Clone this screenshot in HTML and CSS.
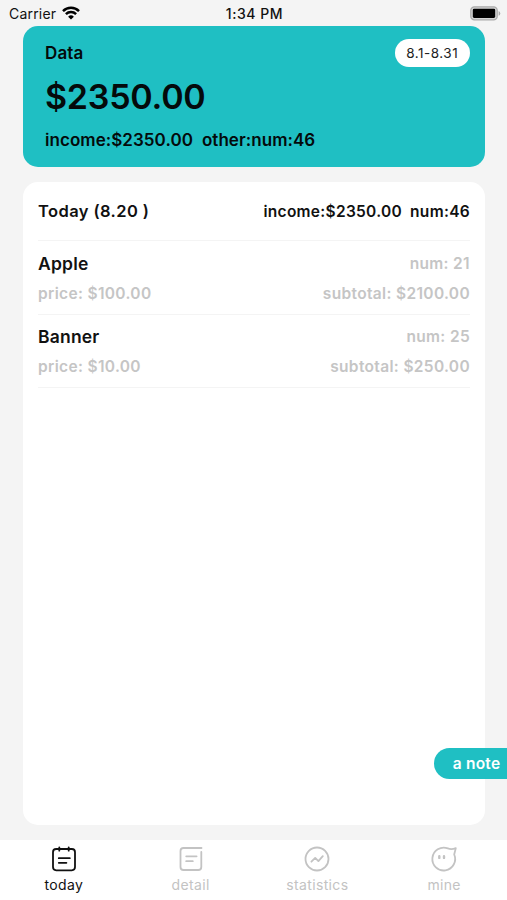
FILE: index.html
```html
<!DOCTYPE html>
<html lang="en">
<head>
<meta charset="utf-8">
<meta name="viewport" content="width=device-width, initial-scale=1">
<title>Today</title>
<link rel="stylesheet" href="styles.css">
</head>
<body>
<div class="app">
  <header class="status">
    <div class="carrier"><span>Carrier</span>
      <svg width="18" height="14" viewBox="0 0 18 14" fill="none" stroke="#000" stroke-width="2.5"><path d="M1 5.1a11.4 11.4 0 0 1 16 0"/><path d="M3.9 8.2a7.3 7.3 0 0 1 10.2 0"/><path d="M9 13.6 6.1 10.7a4.1 4.1 0 0 1 5.8 0z" fill="#000" stroke="none"/></svg>
    </div>
    <time class="clock">1:34 PM</time>
    <svg class="battery" width="31" height="15" viewBox="0 0 31 15"><rect x=".8" y=".8" width="26.4" height="13" rx="3.6" fill="#d5d5d5" stroke="#aaa" stroke-width="1.3"/><rect x="2.8" y="2.7" width="22.4" height="9.2" rx="1.4"/><path d="M28.6 5v4.8q1.7-.8 1.7-2.4T28.6 5z" fill="#aaa"/></svg>
  </header>
  <section class="summary">
    <div class="summary-top"><h1 class="label">Data</h1><button class="range">8.1-8.31</button></div>
    <div class="amount">$2350.00</div>
    <div class="totals"><span>income:$2350.00</span><span>other:num:46</span></div>
  </section>
  <main class="list">
    <div class="list-head"><h2 class="day">Today (8.20 )</h2><div class="day-total"><span>income:$2350.00</span><span>num:46</span></div></div>
    <article class="item">
      <div class="line"><h3 class="name">Apple</h3><span class="meta">num: 21</span></div>
      <div class="line"><span class="meta">price: $100.00</span><span class="meta">subtotal: $2100.00</span></div>
    </article>
    <article class="item">
      <div class="line"><h3 class="name">Banner</h3><span class="meta">num: 25</span></div>
      <div class="line"><span class="meta">price: $10.00</span><span class="meta">subtotal: $250.00</span></div>
    </article>
  </main>
  <nav class="tabs">
    <a class="tab active"><svg width="28" height="28" viewBox="0 0 28 28"><rect x="3" y="4" width="22" height="21.3" rx="3.2"/><path d="M9.3 2.3v3.4M18.7 2.3v3.4M8.8 13.2h11M8.8 17.8h7.6"/></svg><span>today</span></a>
    <a class="tab"><svg width="28" height="28" viewBox="0 0 28 28"><path d="M24.3 7v15q0 3-3 3H6.5q-3 0-3-3V6q0-3 3-3h18M9.2 11.3h10.4M9.2 16.2h6.6"/></svg><span>detail</span></a>
    <a class="tab"><svg width="28" height="28" viewBox="0 0 28 28"><circle cx="14" cy="14" r="11.5"/><path d="m8.4 16.7 3.8-3.8 3.2 3.2 4.4-5"/></svg><span>statistics</span></a>
    <a class="tab"><svg width="28" height="28" viewBox="0 0 28 28"><path d="M17.8 3.4A11.4 11.4 0 1 0 24.2 9.5L25.8 3.1Q21.5 4.8 17.8 3.4z"/><path d="M9.3 11.2v1.7M14 11.2v1.7" stroke-width="2.4"/></svg><span>mine</span></a>
  </nav>
  <button class="note">a note</button>
</div>
</body>
</html>
```

FILE: styles.css
```css
* { box-sizing: border-box; }
body { margin: 0; background: #f4f4f4; font-family: Inter, "Liberation Sans", sans-serif; color: #111; }
h1, h2, h3 { margin: 0; font-weight: 600; }
button { border: 0; padding: 0; font-family: inherit; }
svg { display: block; flex: none; }
.app { position: relative; height: 900px; display: flex; flex-direction: column; overflow: hidden; white-space: nowrap; }
.status { height: 25.5px; flex: none; padding: 1px 6px 0 8px; display: grid; grid-template-columns: 1fr auto 1fr; align-items: center; }
.carrier { display: flex; align-items: center; gap: 6px; padding-left: 1px; font-size: 14px; letter-spacing: .2px; }
.clock { font-size: 14px; font-weight: 500; letter-spacing: .55px; }
.battery { justify-self: end; }
.summary { height: 141.5px; flex: none; margin: 0 22px 0 23px; padding: 13px 15px 0 22px; border-radius: 15px; background: #1fbfc3; color: #040a0b; }
.summary-top { display: flex; justify-content: space-between; align-items: center; height: 28px; }
.label { font-size: 17px; letter-spacing: .1px; }
.range { width: 75.5px; height: 28px; border-radius: 14px; background: #fff; color: #222; font-size: 13.5px; letter-spacing: .5px; }
.amount { margin-top: 9px; font-size: 34px; line-height: 42px; font-weight: 600; letter-spacing: -.25px; }
.totals { display: flex; gap: 9px; margin-top: 11px; font-size: 17px; line-height: 22px; font-weight: 600; letter-spacing: .05px; }
.list { height: 643px; flex: none; margin: 15px 22px 0 23px; padding: 0 15px; border-radius: 15px; background: #fff; }
.list-head { height: 59.4px; display: flex; align-items: center; justify-content: space-between; border-bottom: 1px solid #f4f4f4; }
.day { font-size: 16.5px; letter-spacing: .4px; }
.day-total { display: flex; gap: 8px; font-size: 15.5px; font-weight: 600; letter-spacing: .3px; }
.item { height: 73.2px; padding-top: 7px; border-bottom: 1px solid #f4f4f4; }
.line { height: 30px; display: flex; align-items: center; justify-content: space-between; }
.name { font-size: 17.5px; letter-spacing: .2px; }
.meta { color: #c5c5c5; font-size: 15.5px; font-weight: 600; letter-spacing: .34px; }
.tabs { flex: 1; margin-top: 15px; background: #fff; display: grid; grid-template-columns: repeat(4, 1fr); }
.tab { display: flex; flex-direction: column; align-items: center; padding: 5px 0 0 1px; color: #c3c3c3; font-size: 14px; line-height: 18px; letter-spacing: .35px; }
.tab span { margin-top: 3px; }
.tab svg { fill: none; stroke: currentColor; stroke-width: 1.8; stroke-linecap: round; stroke-linejoin: round; }
.tab.active { color: #111; }
.note { position: absolute; right: 0; top: 748px; width: 73px; height: 31px; padding-left: 12px; border-radius: 16px 0 0 16px; background: #1fbfc3; color: #fff; font-size: 15.5px; font-weight: 600; letter-spacing: .25px; }
```
